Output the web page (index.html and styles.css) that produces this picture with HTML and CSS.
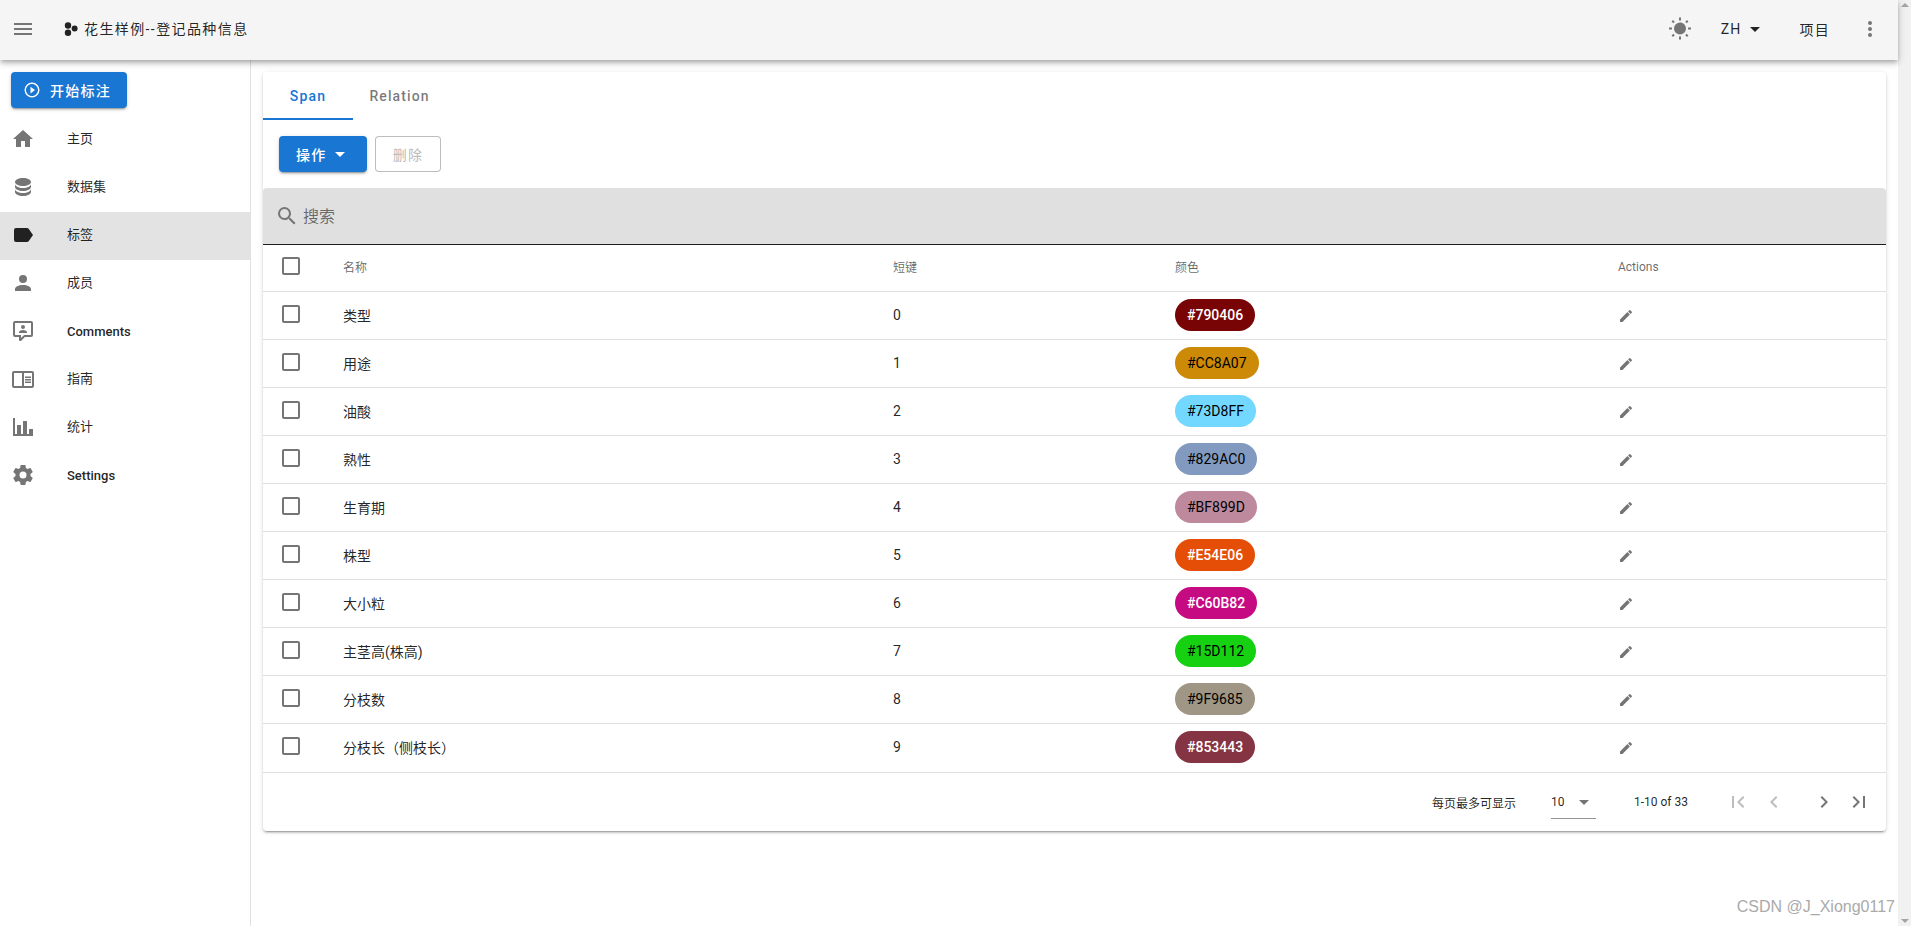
FILE: index.html
```html
<!DOCTYPE html>
<html lang="zh">
<head>
    <meta charset="UTF-8">
    <meta name="viewport" content="width=device-width, initial-scale=1.0">
    <title>花生样例--登记品种信息</title>
    <link rel="stylesheet" href="styles.css">
</head>
<body>
    <svg class="sprite" xmlns="http://www.w3.org/2000/svg">
        <symbol id="i-menu" viewBox="0 0 24 24"><path d="M3,6H21V8H3V6M3,11H21V13H3V11M3,16H21V18H3V16Z"/></symbol>
        <symbol id="i-sun" viewBox="0 0 24 24"><path d="M3.55,18.54L4.96,19.95L6.76,18.16L5.34,16.74M11,22.45C11.32,22.45 13,22.45 13,22.45V19.5H11M12,5.5A6,6 0 0,0 6,11.5A6,6 0 0,0 12,17.5A6,6 0 0,0 18,11.5C18,8.18 15.31,5.5 12,5.5M20,12.5H23V10.5H20M17.24,18.16L19.04,19.95L20.45,18.54L18.66,16.74M20.45,4.46L19.04,3.05L17.24,4.84L18.66,6.26M13,0.55H11V3.5H13M4,10.5H1V12.5H4M6.76,4.84L4.96,3.05L3.55,4.46L5.34,6.26L6.76,4.84Z"/></symbol>
        <symbol id="i-caret" viewBox="0 0 24 24"><path d="M7,10L12,15L17,10H7Z"/></symbol>
        <symbol id="i-dots" viewBox="0 0 24 24"><path d="M12,16A2,2 0 0,1 14,18A2,2 0 0,1 12,20A2,2 0 0,1 10,18A2,2 0 0,1 12,16M12,10A2,2 0 0,1 14,12A2,2 0 0,1 12,14A2,2 0 0,1 10,12A2,2 0 0,1 12,10M12,4A2,2 0 0,1 14,6A2,2 0 0,1 12,8A2,2 0 0,1 10,6A2,2 0 0,1 12,4Z"/></symbol>
        <symbol id="i-play" viewBox="0 0 24 24"><path d="M10,16.5L16,12L10,7.5V16.5M12,2A10,10 0 0,0 2,12A10,10 0 0,0 12,22A10,10 0 0,0 22,12A10,10 0 0,0 12,2M12,20C7.59,20 4,16.41 4,12C4,7.59 7.59,4 12,4C16.41,4 20,7.59 20,12C20,16.41 16.41,20 12,20Z"/></symbol>
        <symbol id="i-home" viewBox="0 0 24 24"><path d="M10,20V14H14V20H19V12H22L12,3L2,12H5V20H10Z"/></symbol>
        <symbol id="i-database" viewBox="0 0 24 24"><path d="M12,3C7.58,3 4,4.79 4,7C4,9.21 7.58,11 12,11C16.42,11 20,9.21 20,7C20,4.79 16.42,3 12,3M4,9V12C4,14.21 7.58,16 12,16C16.42,16 20,14.21 20,12V9C20,11.21 16.42,13 12,13C7.58,13 4,11.21 4,9M4,14V17C4,19.21 7.58,21 12,21C16.42,21 20,19.21 20,17V14C20,16.21 16.42,18 12,18C7.58,18 4,16.21 4,14Z"/></symbol>
        <symbol id="i-label" viewBox="0 0 24 24"><path d="M17.63,5.84C17.27,5.33 16.67,5 16,5H5A2,2 0 0,0 3,7V17A2,2 0 0,0 5,19H16C16.67,19 17.27,18.66 17.63,18.15L22,12L17.63,5.84Z"/></symbol>
        <symbol id="i-account" viewBox="0 0 24 24"><path d="M12,4A4,4 0 0,1 16,8A4,4 0 0,1 12,12A4,4 0 0,1 8,8A4,4 0 0,1 12,4M12,14C16.42,14 20,15.79 20,18V20H4V18C4,15.79 7.58,14 12,14Z"/></symbol>
        <symbol id="i-comment" viewBox="0 0 24 24"><path d="M9,22A1,1 0 0,1 8,21V18H4A2,2 0 0,1 2,16V4C2,2.89 2.9,2 4,2H20A2,2 0 0,1 22,4V16A2,2 0 0,1 20,18H13.9L10.2,21.71C10,21.9 9.75,22 9.5,22V22H9M10,16V19.08L13.08,16H20V4H4V16H10M16,14H8V13C8,11.67 10.67,11 12,11C13.33,11 16,11.67 16,13V14M12,6A2,2 0 0,1 14,8A2,2 0 0,1 12,10A2,2 0 0,1 10,8A2,2 0 0,1 12,6Z"/></symbol>
        <symbol id="i-book" viewBox="0 0 24 24"><path d="M21,4H3A2,2 0 0,0 1,6V19A2,2 0 0,0 3,21H21A2,2 0 0,0 23,19V6A2,2 0 0,0 21,4M3,19V6H11V19H3M21,19H13V6H21V19M14,9.5H20V11H14V9.5M14,12H20V13.5H14V12M14,14.5H20V16H14V14.5Z"/></symbol>
        <symbol id="i-chart" viewBox="0 0 24 24"><path d="M22,21H2V3H4V19H6V10H10V19H12V6H16V19H18V14H22V21Z"/></symbol>
        <symbol id="i-cog" viewBox="0 0 24 24"><path d="M12,15.5A3.5,3.5 0 0,1 8.5,12A3.5,3.5 0 0,1 12,8.5A3.5,3.5 0 0,1 15.5,12A3.5,3.5 0 0,1 12,15.5M19.43,12.97C19.47,12.65 19.5,12.33 19.5,12C19.5,11.67 19.47,11.34 19.43,11L21.54,9.37C21.73,9.22 21.78,8.95 21.66,8.73L19.66,5.27C19.54,5.05 19.27,4.96 19.05,5.05L16.56,6.05C16.04,5.66 15.5,5.32 14.87,5.07L14.5,2.42C14.46,2.18 14.25,2 14,2H10C9.75,2 9.54,2.18 9.5,2.42L9.13,5.07C8.5,5.32 7.96,5.66 7.44,6.05L4.95,5.05C4.73,4.96 4.46,5.05 4.34,5.27L2.34,8.73C2.21,8.95 2.27,9.22 2.46,9.37L4.57,11C4.53,11.34 4.5,11.67 4.5,12C4.5,12.33 4.53,12.65 4.57,12.97L2.46,14.63C2.27,14.78 2.21,15.05 2.34,15.27L4.34,18.73C4.46,18.95 4.73,19.03 4.95,18.95L7.44,17.94C7.96,18.34 8.5,18.68 9.13,18.93L9.5,21.58C9.54,21.82 9.75,22 10,22H14C14.25,22 14.46,21.82 14.5,21.58L14.87,18.93C15.5,18.67 16.04,18.34 16.56,17.94L19.05,18.95C19.27,19.03 19.54,18.95 19.66,18.73L21.66,15.27C21.78,15.05 21.73,14.78 21.54,14.63L19.43,12.97Z"/></symbol>
        <symbol id="i-search" viewBox="0 0 24 24"><path d="M9.5,3A6.5,6.5 0 0,1 16,9.5C16,11.11 15.41,12.59 14.44,13.73L14.71,14H15.5L20.5,19L19,20.5L14,15.5V14.71L13.73,14.44C12.59,15.41 11.11,16 9.5,16A6.5,6.5 0 0,1 3,9.5A6.5,6.5 0 0,1 9.5,3M9.5,5C7,5 5,7 5,9.5C5,12 7,14 9.5,14C12,14 14,12 14,9.5C14,7 12,5 9.5,5Z"/></symbol>
        <symbol id="i-check" viewBox="0 0 24 24"><path d="M19,3H5C3.89,3 3,3.89 3,5V19A2,2 0 0,0 5,21H19A2,2 0 0,0 21,19V5C21,3.89 20.1,3 19,3M19,5V19H5V5H19Z"/></symbol>
        <symbol id="i-pencil" viewBox="0 0 24 24"><path d="M20.71,7.04C21.1,6.65 21.1,6 20.71,5.63L18.37,3.29C18,2.9 17.35,2.9 16.96,3.29L15.12,5.12L18.87,8.87M3,17.25V21H6.75L17.81,9.93L14.06,6.18L3,17.25Z"/></symbol>
        <symbol id="i-first" viewBox="0 0 24 24"><path d="M18.41,16.59L13.82,12L18.41,7.41L17,6L11,12L17,18L18.41,16.59M6,6H8V18H6V6Z"/></symbol>
        <symbol id="i-prev" viewBox="0 0 24 24"><path d="M15.41,16.58L10.83,12L15.41,7.41L14,6L8,12L14,18L15.41,16.58Z"/></symbol>
        <symbol id="i-next" viewBox="0 0 24 24"><path d="M8.59,16.58L13.17,12L8.59,7.41L10,6L16,12L10,18L8.59,16.58Z"/></symbol>
        <symbol id="i-last" viewBox="0 0 24 24"><path d="M5.59,7.41L10.18,12L5.59,16.59L7,18L13,12L7,6L5.59,7.41M16,6H18V18H16V6Z"/></symbol>
    </svg>

    <div class="page">
        <div class="app">
            <header class="topbar">
                <svg class="icon menu-btn"><use href="#i-menu"/></svg>
                <svg class="logo" viewBox="0 0 14 14"><circle cx="4" cy="3.5" r="3.2"/><circle cx="4" cy="10.8" r="3.2"/><circle cx="10.6" cy="6.6" r="3"/></svg>
                <span class="title">花生样例--登记品种信息</span>
                <svg class="icon sun"><use href="#i-sun"/></svg>
                <span class="lang">ZH<svg class="icon"><use href="#i-caret"/></svg></span>
                <span class="project">项目</span>
                <svg class="icon more"><use href="#i-dots"/></svg>
            </header>

            <div class="body">
                <nav class="sidebar">
                    <button class="btn btn-primary start"><svg class="icon"><use href="#i-play"/></svg>开始标注</button>
                    <a class="nav-item"><svg class="icon"><use href="#i-home"/></svg><span>主页</span></a>
                    <a class="nav-item"><svg class="icon"><use href="#i-database"/></svg><span>数据集</span></a>
                    <a class="nav-item active"><svg class="icon"><use href="#i-label"/></svg><span>标签</span></a>
                    <a class="nav-item"><svg class="icon"><use href="#i-account"/></svg><span>成员</span></a>
                    <a class="nav-item"><svg class="icon"><use href="#i-comment"/></svg><span class="latin">Comments</span></a>
                    <a class="nav-item"><svg class="icon"><use href="#i-book"/></svg><span>指南</span></a>
                    <a class="nav-item"><svg class="icon"><use href="#i-chart"/></svg><span>统计</span></a>
                    <a class="nav-item"><svg class="icon"><use href="#i-cog"/></svg><span class="latin">Settings</span></a>
                </nav>

                <main class="content">
                    <div class="card">
                        <div class="tabs">
                            <div class="tab active">Span</div>
                            <div class="tab">Relation</div>
                        </div>
                        <div class="actions">
                            <button class="btn btn-primary">操作<svg class="icon"><use href="#i-caret"/></svg></button>
                            <button class="btn btn-disabled">删除</button>
                        </div>
                        <div class="search">
                            <svg class="icon"><use href="#i-search"/></svg>
                            <span>搜索</span>
                        </div>
                        <table class="table">
                            <thead>
                                <tr>
                                    <th class="col-check"><svg class="icon check"><use href="#i-check"/></svg></th>
                                    <th class="col-name">名称</th>
                                    <th class="col-key">短键</th>
                                    <th class="col-color">颜色</th>
                                    <th>Actions</th>
                                </tr>
                            </thead>
                            <tbody>
                                <tr>
                                    <td class="col-check"><svg class="icon check"><use href="#i-check"/></svg></td>
                                    <td class="cell-up">类型</td><td class="cell-up">0</td>
                                    <td class="cell-up"><span class="chip chip-white" style="background-color:#790406">#790406</span></td>
                                    <td><svg class="icon pencil"><use href="#i-pencil"/></svg></td>
                                </tr>
                                <tr>
                                    <td class="col-check"><svg class="icon check"><use href="#i-check"/></svg></td>
                                    <td class="cell-up">用途</td><td class="cell-up">1</td>
                                    <td class="cell-up"><span class="chip" style="background-color:#CC8A07">#CC8A07</span></td>
                                    <td><svg class="icon pencil"><use href="#i-pencil"/></svg></td>
                                </tr>
                                <tr>
                                    <td class="col-check"><svg class="icon check"><use href="#i-check"/></svg></td>
                                    <td class="cell-up">油酸</td><td class="cell-up">2</td>
                                    <td class="cell-up"><span class="chip" style="background-color:#73D8FF">#73D8FF</span></td>
                                    <td><svg class="icon pencil"><use href="#i-pencil"/></svg></td>
                                </tr>
                                <tr>
                                    <td class="col-check"><svg class="icon check"><use href="#i-check"/></svg></td>
                                    <td class="cell-up">熟性</td><td class="cell-up">3</td>
                                    <td class="cell-up"><span class="chip" style="background-color:#829AC0">#829AC0</span></td>
                                    <td><svg class="icon pencil"><use href="#i-pencil"/></svg></td>
                                </tr>
                                <tr>
                                    <td class="col-check"><svg class="icon check"><use href="#i-check"/></svg></td>
                                    <td class="cell-up">生育期</td><td class="cell-up">4</td>
                                    <td class="cell-up"><span class="chip" style="background-color:#BF899D">#BF899D</span></td>
                                    <td><svg class="icon pencil"><use href="#i-pencil"/></svg></td>
                                </tr>
                                <tr>
                                    <td class="col-check"><svg class="icon check"><use href="#i-check"/></svg></td>
                                    <td class="cell-up">株型</td><td class="cell-up">5</td>
                                    <td class="cell-up"><span class="chip chip-white" style="background-color:#E54E06">#E54E06</span></td>
                                    <td><svg class="icon pencil"><use href="#i-pencil"/></svg></td>
                                </tr>
                                <tr>
                                    <td class="col-check"><svg class="icon check"><use href="#i-check"/></svg></td>
                                    <td class="cell-up">大小粒</td><td class="cell-up">6</td>
                                    <td class="cell-up"><span class="chip chip-white" style="background-color:#C60B82">#C60B82</span></td>
                                    <td><svg class="icon pencil"><use href="#i-pencil"/></svg></td>
                                </tr>
                                <tr>
                                    <td class="col-check"><svg class="icon check"><use href="#i-check"/></svg></td>
                                    <td class="cell-up">主茎高(株高)</td><td class="cell-up">7</td>
                                    <td class="cell-up"><span class="chip" style="background-color:#15D112">#15D112</span></td>
                                    <td><svg class="icon pencil"><use href="#i-pencil"/></svg></td>
                                </tr>
                                <tr>
                                    <td class="col-check"><svg class="icon check"><use href="#i-check"/></svg></td>
                                    <td class="cell-up">分枝数</td><td class="cell-up">8</td>
                                    <td class="cell-up"><span class="chip" style="background-color:#9F9685">#9F9685</span></td>
                                    <td><svg class="icon pencil"><use href="#i-pencil"/></svg></td>
                                </tr>
                                <tr>
                                    <td class="col-check"><svg class="icon check"><use href="#i-check"/></svg></td>
                                    <td class="cell-up">分枝长（侧枝长）</td><td class="cell-up">9</td>
                                    <td class="cell-up"><span class="chip chip-white" style="background-color:#853443">#853443</span></td>
                                    <td><svg class="icon pencil"><use href="#i-pencil"/></svg></td>
                                </tr>
                            </tbody>
                        </table>
                        <div class="pager">
                            <span class="per-page">每页最多可显示</span>
                            <div class="select"><span>10</span><svg class="icon"><use href="#i-caret"/></svg></div>
                            <span class="range">1-10 of 33</span>
                            <svg class="icon off pg-first"><use href="#i-first"/></svg>
                            <svg class="icon off pg-prev"><use href="#i-prev"/></svg>
                            <svg class="icon pg-next"><use href="#i-next"/></svg>
                            <svg class="icon pg-last"><use href="#i-last"/></svg>
                        </div>
                    </div>
                </main>
            </div>
        </div>

        <div class="scrollbar">
            <span class="arrow-up"></span>
            <span class="arrow-down"></span>
        </div>
    </div>

    <div class="watermark">CSDN @J_Xiong0117</div>
</body>
</html>
```

FILE: styles.css
```css
* {
    margin: 0;
    padding: 0;
    box-sizing: border-box;
}
html, body {
    height: 100%;
    overflow: hidden;
}
body {
    background: #fff;
    color: rgba(0, 0, 0, 0.87);
    font-family: Roboto, "Noto Sans CJK SC", sans-serif;
    font-size: 14px;
}
.sprite {
    display: none;
}
.icon {
    width: 24px;
    height: 24px;
    fill: #757575;
    flex: none;
}

.page {
    display: flex;
    height: 926px;
}
.app {
    flex: 1;
    min-width: 0;
    display: flex;
    flex-direction: column;
}

/* top bar */
.topbar {
    height: 60px;
    flex: none;
    display: flex;
    align-items: center;
    padding: 0 16px 3px 11px;
    background: #f5f5f5;
    box-shadow: 0 2px 4px -1px rgba(0, 0, 0, .2), 0 4px 5px 0 rgba(0, 0, 0, .14), 0 1px 10px 0 rgba(0, 0, 0, .12);
    position: relative;
    z-index: 2;
}
.logo {
    width: 14px;
    height: 14px;
    margin-left: 29px;
    fill: #222;
}
.title {
    margin-left: 6px;
    margin-bottom: 2px;
    letter-spacing: 1.4px;
    font-size: 14px;
    color: rgba(0, 0, 0, .87);
}
.sun {
    margin-left: auto;
}
.lang {
    display: flex;
    align-items: center;
    margin-left: 29px;
    letter-spacing: 1.25px;
    font-size: 14px;
}
.lang .icon {
    fill: #222;
    margin-left: 1px;
}
.project {
    margin-left: 33px;
    letter-spacing: 1.25px;
}
.more {
    margin-left: 28px;
}

/* left menu */
.body {
    flex: 1;
    display: flex;
    min-height: 0;
}
.sidebar {
    width: 251px;
    flex: none;
    border-right: 1px solid #e0e0e0;
    padding-top: 12px;
}
.btn {
    display: inline-flex;
    align-items: center;
    height: 36px;
    border: 0;
    border-radius: 4px;
    font-family: inherit;
    font-size: 14px;
    font-weight: 500;
    letter-spacing: 1.25px;
}
.btn-primary {
    background: #1976d2;
    color: #fff;
    box-shadow: 0 3px 1px -2px rgba(0, 0, 0, .2), 0 2px 2px 0 rgba(0, 0, 0, .14), 0 1px 5px 0 rgba(0, 0, 0, .12);
}
.btn-primary .icon {
    fill: #fff;
}
.start {
    width: 116px;
    margin-left: 11px;
    padding-left: 12px;
}
.start .icon {
    width: 18px;
    height: 18px;
    margin-right: 9px;
}
.nav-item {
    display: flex;
    align-items: center;
    height: 48px;
    padding: 0 0 2px 11px;
    font-size: 13px;
}
.nav-item span {
    margin: 0 0 3px 32px;
}
.nav-item .latin {
    margin-bottom: 0;
    font-weight: 500;
}
.nav-item.active {
    background: #e3e3e3;
}
.nav-item.active .icon {
    fill: #212121;
}
.start + .nav-item {
    margin-top: 8px;
}

/* main card */
.content {
    flex: 1;
    min-width: 0;
    padding: 12px;
}
.card {
    background: #fff;
    border-radius: 4px;
    box-shadow: 0 3px 1px -2px rgba(0, 0, 0, .2), 0 2px 2px 0 rgba(0, 0, 0, .14), 0 1px 5px 0 rgba(0, 0, 0, .12);
}
.tabs {
    display: flex;
    height: 48px;
}
.tab {
    width: 93px;
    line-height: 48px;
    text-align: center;
    font-weight: 500;
    letter-spacing: 1.1px;
    color: rgba(0, 0, 0, .54);
}
.tab.active {
    width: 90px;
    letter-spacing: 1.25px;
    color: #1976d2;
    border-bottom: 2px solid #1976d2;
}
.actions {
    display: flex;
    gap: 8px;
    padding: 16px 16px;
}
.actions .btn-primary {
    width: 88px;
    padding-left: 17px;
}
.actions .btn-primary .icon {
    margin-left: 1px;
}
.btn-disabled {
    width: 66px;
    justify-content: center;
    background: #fff;
    border: 1px solid rgba(0, 0, 0, .26);
    color: rgba(0, 0, 0, .26);
}
.search {
    display: flex;
    align-items: center;
    height: 57px;
    padding-left: 12px;
    background: #e0e0e0;
    border-bottom: 1px solid #1c1c1c;
    border-radius: 4px 4px 0 0;
    font-size: 16px;
    color: rgba(0, 0, 0, .54);
}
.search span {
    margin: 0 0 2px 4px;
}

/* table */
.table {
    width: 100%;
    border-collapse: separate;
    border-spacing: 0;
    table-layout: fixed;
}
.table th {
    height: 47px;
    font-size: 12px;
    font-weight: 400;
    text-align: left;
    color: rgba(0, 0, 0, .6);
    padding: 0 16px 3px;
    border-bottom: 1px solid #e0e0e0;
}
.table td {
    height: 48px;
    padding: 0 16px;
    border-bottom: 1px solid #e0e0e0;
    color: rgba(0, 0, 0, .87);
}
.table td.cell-up {
    padding-bottom: 2px;
}
.table tbody tr:last-child td {
    height: 49px;
}
.table th.col-check,
.table td.col-check {
    padding: 0 0 0 16px;
}
.col-check {
    width: 64px;
}
.col-name {
    width: 550px;
}
.col-key {
    width: 282px;
}
.col-color {
    width: 443px;
}
.check {
    display: block;
    margin-bottom: 4px;
}
.chip {
    display: inline-block;
    height: 32px;
    line-height: 32px;
    padding: 0 12px;
    border-radius: 16px;
    color: #000;
    vertical-align: middle;
}
.chip-white {
    color: #fff;
    font-weight: 500;
}
.pencil {
    display: block;
    width: 16px;
    height: 16px;
}

/* footer */
.pager {
    display: flex;
    align-items: center;
    height: 58px;
    font-size: 12px;
    padding-left: 1169px;
}
.per-page {
    width: 119px;
}
.select {
    display: flex;
    align-items: center;
    justify-content: space-between;
    width: 45px;
    height: 30px;
    margin-top: 4px;
    padding-bottom: 3px;
    border-bottom: 1px solid #949494;
}
.range {
    margin-left: 38px;
    width: 86px;
}
.pg-first {
    margin-left: 6px;
}
.pg-prev {
    margin-left: 12px;
}
.pg-next {
    margin-left: 26px;
}
.pg-last {
    margin-left: 11px;
}
.pager .off {
    fill: #bdbdbd;
}

/* fake browser scrollbar */
.scrollbar {
    width: 13px;
    flex: none;
    background: #f1f1f1;
    position: relative;
}
.arrow-up,
.arrow-down {
    position: absolute;
    left: 3px;
    width: 0;
    height: 0;
    border-left: 4px solid transparent;
    border-right: 4px solid transparent;
}
.arrow-up {
    top: 3px;
    border-bottom: 4px solid #a3a3a3;
}
.arrow-down {
    bottom: 3px;
    border-top: 4px solid #a3a3a3;
}

.watermark {
    position: absolute;
    right: 16px;
    bottom: 10px;
    font-family: "Liberation Sans", sans-serif;
    font-size: 16px;
    color: #aaa;
}
```
